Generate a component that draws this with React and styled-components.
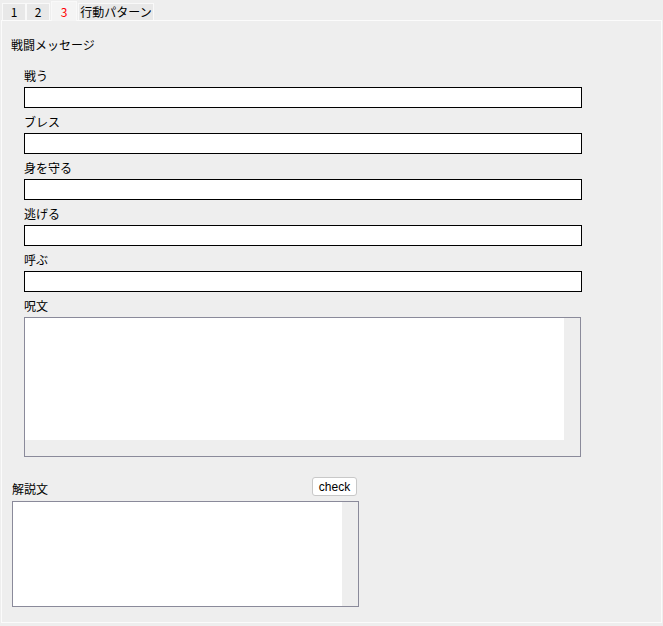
import React from "react";
import styled, { createGlobalStyle } from "styled-components";

const GlobalStyle = createGlobalStyle`
  html, body {
    margin: 0;
    padding: 0;
    background: #eeeeee;
  }
  body {
    font-family: "Noto Sans CJK JP", "Liberation Sans", sans-serif;
    font-size: 12px;
    color: #000;
  }
`;

const Window = styled.div`
  width: 663px;
  height: 626px;
  background: #eeeeee;
  overflow: hidden;
`;

const TabBar = styled.div`
  height: 20px;
  display: flex;
  align-items: flex-end;
  padding-left: 2px;
`;

const Tab = styled.div`
  box-sizing: border-box;
  height: ${(p) => (p.active ? "20px" : "17px")};
  width: ${(p) => p.w}px;
  margin: ${(p) => (p.active ? "0 1px -1px 1px" : "0")};
  display: flex;
  align-items: center;
  justify-content: center;
  line-height: 14px;
  background: ${(p) => (p.active ? "#f4f4f4" : "#e8e8e8")};
  border: 1px solid #f9f9f9;
  border-bottom: none;
  color: ${(p) => (p.active ? "#ff0000" : "#000")};
  position: relative;
`;

const Panel = styled.div`
  box-sizing: border-box;
  margin-left: 1px;
  width: 661px;
  height: 603px;
  border: 1px solid #fbfbfb;
`;

const Heading = styled.div`
  margin: 17px 0 0 9px;
  line-height: 14px;
`;

const Fields = styled.div`
  margin: 17px 0 0 22px;
  display: flex;
  flex-direction: column;
  gap: 7px;
`;

const Field = styled.div`
  display: flex;
  flex-direction: column;
  gap: 4px;
`;

const Label = styled.div`
  line-height: 14px;
  white-space: nowrap;
`;

const TextInput = styled.input`
  box-sizing: border-box;
  width: 558px;
  height: 21px;
  margin: 0;
  padding: 0 3px;
  border: 1px solid #000;
  background: #fff;
  outline: none;
  font: inherit;
`;

const ScrollBox = styled.div`
  box-sizing: border-box;
  width: ${(p) => p.w}px;
  height: ${(p) => p.h}px;
  border: 1px solid #8a8a9a;
  background: #eeeeee;
  display: grid;
  grid-template-columns: 1fr 16px;
  grid-template-rows: ${(p) => (p.hscroll ? "1fr 16px" : "1fr")};
`;

const Area = styled.textarea`
  box-sizing: border-box;
  width: 100%;
  height: 100%;
  margin: 0;
  padding: 2px;
  border: none;
  resize: none;
  outline: none;
  background: #fff;
  font: inherit;
`;

const Lower = styled.div`
  margin: 20px 0 0 10px;
  width: 347px;
`;

const LowerHead = styled.div`
  display: flex;
  justify-content: space-between;
  align-items: flex-end;
  margin-right: 2px;
`;

const LowerLabel = styled(Label)`
  margin-bottom: 0;
`;

const CheckButton = styled.button`
  box-sizing: border-box;
  width: 45px;
  height: 19px;
  padding: 0;
  border: 1px solid #c8c8c8;
  border-radius: 3px;
  background: #fff;
  font-family: "Liberation Sans", sans-serif;
  font-size: 12px;
  color: #000;
`;

const LowerBox = styled(ScrollBox)`
  margin-top: 5px;
`;

const fields = ["戦う", "ブレス", "身を守る", "逃げる", "呼ぶ"];

const tabs = [
  { label: "1", w: 24 },
  { label: "2", w: 24 },
  { label: "3", w: 26, active: true },
  { label: "行動パターン", w: 76 },
];

export default function App() {
  return (
    <Window>
      <GlobalStyle />
      <TabBar>
        {tabs.map((t) => (
          <Tab key={t.label} w={t.w} active={t.active ? 1 : 0}>
            {t.label}
          </Tab>
        ))}
      </TabBar>
      <Panel>
        <Heading>戦闘メッセージ</Heading>
        <Fields>
          {fields.map((f) => (
            <Field key={f}>
              <Label>{f}</Label>
              <TextInput type="text" />
            </Field>
          ))}
          <Field>
            <Label>呪文</Label>
            <ScrollBox w={557} h={140} hscroll>
              <Area />
              <div />
              <div />
              <div />
            </ScrollBox>
          </Field>
        </Fields>
        <Lower>
          <LowerHead>
            <LowerLabel>解説文</LowerLabel>
            <CheckButton>check</CheckButton>
          </LowerHead>
          <LowerBox w={347} h={106}>
            <Area />
            <div />
          </LowerBox>
        </Lower>
      </Panel>
    </Window>
  );
}
